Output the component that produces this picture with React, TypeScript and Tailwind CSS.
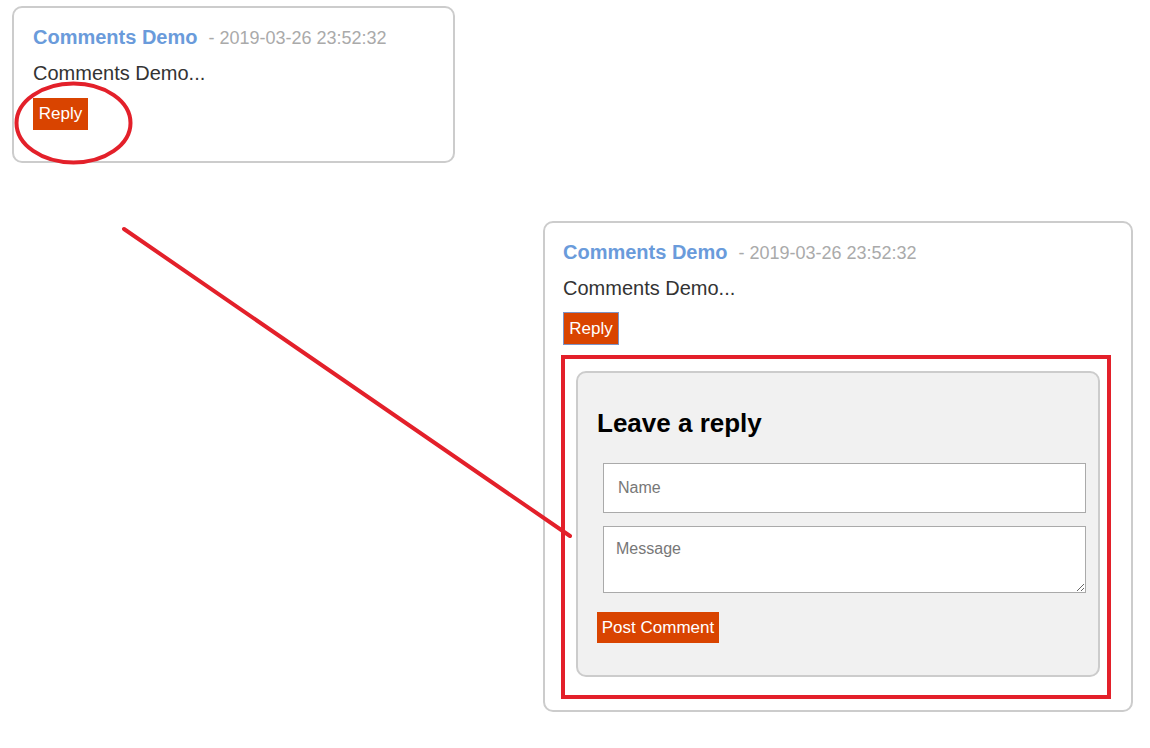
const ORANGE = 'bg-[#d94400]';

function CommentHeader() {
  return (
    <>
      <div className="flex items-baseline leading-[24px]">
        <span className="text-[20px] font-bold text-[#6a9bdb]">Comments Demo</span>
        <span className="ml-[11px] text-[18px] text-[#aaaaaa]">- 2019-03-26 23:52:32</span>
      </div>
      <p className="mt-[11px] text-[20px] leading-[24px] text-[#333333]">Comments Demo...</p>
    </>
  );
}

export default function App() {
  return (
    <div className="relative h-[748px] w-[1150px] overflow-hidden bg-white font-['Liberation_Sans',Arial,sans-serif]">
      {/* first comment, collapsed */}
      <div className="ml-[12px] mt-[6px] w-[443px] rounded-[10px] border-2 border-[#cccccc] pb-[31px] pl-[19px] pt-[17px]">
        <CommentHeader />
        <button
          className={`mt-[13px] flex h-[32px] w-[55px] items-center justify-center ${ORANGE} text-[17px] text-white`}
        >
          Reply
        </button>
      </div>

      {/* second comment, reply form open */}
      <div className="ml-[543px] mt-[58px] w-[590px] rounded-[10px] border-2 border-[#cccccc] pb-[33px] pl-[18px] pt-[17px]">
        <CommentHeader />
        <button
          className={`mt-[12px] flex h-[33px] w-[56px] items-center justify-center border border-[#7d92c4] ${ORANGE} text-[17px] text-white`}
        >
          Reply
        </button>

        <div className="ml-[13px] mt-[26px] w-[524px] rounded-[10px] border-2 border-[#cccccc] bg-[#f1f1f1] pb-[32px] pl-[19px] pt-[35px]">
          <h3 className="text-[26px] font-bold leading-[30px] text-black">Leave a reply</h3>
          <input
            placeholder="Name"
            className="ml-[6px] mt-[25px] block h-[50px] w-[483px] border border-[#aaaaaa] bg-white px-[14px] text-[16px] text-[#333] outline-none placeholder:text-[#777777]"
          />
          <textarea
            placeholder="Message"
            className="ml-[6px] mt-[13px] block h-[67px] w-[483px] border border-[#aaaaaa] bg-white px-[12px] pt-[12px] text-[16px] leading-[20px] text-[#333] outline-none placeholder:text-[#777777]"
          />
          <button
            className={`mt-[19px] flex h-[31px] w-[122px] items-center justify-center ${ORANGE} text-[17px] text-white`}
          >
            Post Comment
          </button>
        </div>
      </div>

      {/* annotations */}
      <svg
        className="pointer-events-none absolute left-0 top-0"
        width="1150"
        height="748"
        viewBox="0 0 1150 748"
        fill="none"
      >
        <ellipse cx="73.5" cy="123" rx="57" ry="39.5" stroke="#e3202a" strokeWidth="4" />
        <line x1="124" y1="229" x2="570" y2="536" stroke="#e3202a" strokeWidth="4" strokeLinecap="round" />
        <rect x="563" y="357" width="546" height="340" stroke="#e3202a" strokeWidth="4" />
      </svg>
    </div>
  );
}
